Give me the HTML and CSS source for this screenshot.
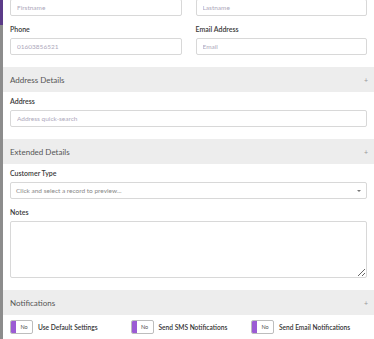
FILE: index.html
```html
<!DOCTYPE html>
<html lang="en">
<head>
  <meta charset="UTF-8">
  <meta name="viewport" content="width=device-width, initial-scale=1">
  <title>Customer</title>
  <link rel="stylesheet" href="styles.css">
</head>
<body>
  <div class="rail"></div>
  <div class="form">
    <div class="section top">
      <div class="row">
        <div class="field">
          <input type="text" placeholder="Firstname">
        </div>
        <div class="field">
          <input type="text" placeholder="Lastname">
        </div>
      </div>
      <div class="row">
        <div class="field">
          <label>Phone</label>
          <input type="text" placeholder="01603856521">
        </div>
        <div class="field">
          <label>Email Address</label>
          <input type="text" placeholder="Email">
        </div>
      </div>
    </div>

    <div class="band"><span>Address Details</span><span class="plus">+</span></div>
    <div class="section">
      <div class="field">
        <label>Address</label>
        <input type="text" placeholder="Address quick-search">
      </div>
    </div>

    <div class="band"><span>Extended Details</span><span class="plus">+</span></div>
    <div class="section">
      <div class="field">
        <label>Customer Type</label>
        <div class="select">
          <span>Click and select a record to preview...</span>
          <span class="caret"></span>
        </div>
      </div>
      <div class="field">
        <label>Notes</label>
        <textarea></textarea>
      </div>
    </div>

    <div class="band"><span>Notifications</span><span class="plus">+</span></div>
    <div class="toggles">
      <div class="toggle-item">
        <span class="toggle"><span class="knob"></span><span class="state">No</span></span>
        <span class="toggle-label">Use Default Settings</span>
      </div>
      <div class="toggle-item">
        <span class="toggle"><span class="knob"></span><span class="state">No</span></span>
        <span class="toggle-label">Send SMS Notifications</span>
      </div>
      <div class="toggle-item">
        <span class="toggle"><span class="knob"></span><span class="state">No</span></span>
        <span class="toggle-label">Send Email Notifications</span>
      </div>
    </div>
  </div>
</body>
</html>
```

FILE: styles.css
```css
html, body { height: 100%; }
body {
  margin: 0; display: flex; overflow: hidden;
  font-family: Lato, "Liberation Sans", sans-serif;
  background: #fff; color: #333;
}
.rail {
  width: 3px; flex: none;
  background: linear-gradient(#5b3b88 0 25px, #8c8c8c 25px);
}
.form { flex: 1; min-width: 0; }

.section { padding: 4px 7px 12px; }
.section.top { margin-top: -1px; padding-top: 0; }
.row { display: flex; gap: 14px; }
.row + .row { margin-top: 8px; }
.row .field { flex: 1; }
.field + .field { margin-top: 8px; }
.row .field + .field { margin-top: 0; }

label {
  display: block; font-size: 7px; line-height: 10px;
  font-weight: 600; color: #3a3a3a; margin-bottom: 4px;
}
input, .select, textarea {
  display: block; width: 100%; box-sizing: border-box;
  border: 1px solid #d8d8d8; border-radius: 2px;
  background: #fff; font-family: inherit; font-size: 6.5px;
  color: #444; margin: 0;
}
input { height: 17px; padding: 0 6px; outline: none; }
input::placeholder { color: #ada8bb; }
.select {
  height: 17px; padding: 0 5px;
  display: flex; align-items: center; justify-content: space-between;
  color: #888;
}
.caret {
  width: 0; height: 0;
  border-left: 2px solid transparent; border-right: 2px solid transparent;
  border-top: 2.5px solid #777;
}
textarea { height: 57px; resize: vertical; padding: 4px 6px; }

.band {
  height: 25px; background: #ededed;
  display: flex; align-items: center; justify-content: space-between;
  padding: 0 6px 0 7px;
  font-size: 8px; color: #555;
}
.plus { font-size: 7px; color: #999; }

.toggles {
  display: grid; grid-template-columns: repeat(3, 120.5px);
  padding: 5px 7px;
}
.toggle-item { display: flex; align-items: center; gap: 5px; }
.toggle {
  display: flex; width: 23px; height: 14px; box-sizing: border-box;
  border: 1px solid #bdbdbd; border-radius: 2px; overflow: hidden;
}
.knob { width: 5px; background: #9b5bd4; }
.state {
  flex: 1; display: flex; align-items: center; justify-content: center;
  font-size: 5.5px; color: #555;
}
.toggle-label { font-size: 6.6px; font-weight: 600; color: #333; }
```
